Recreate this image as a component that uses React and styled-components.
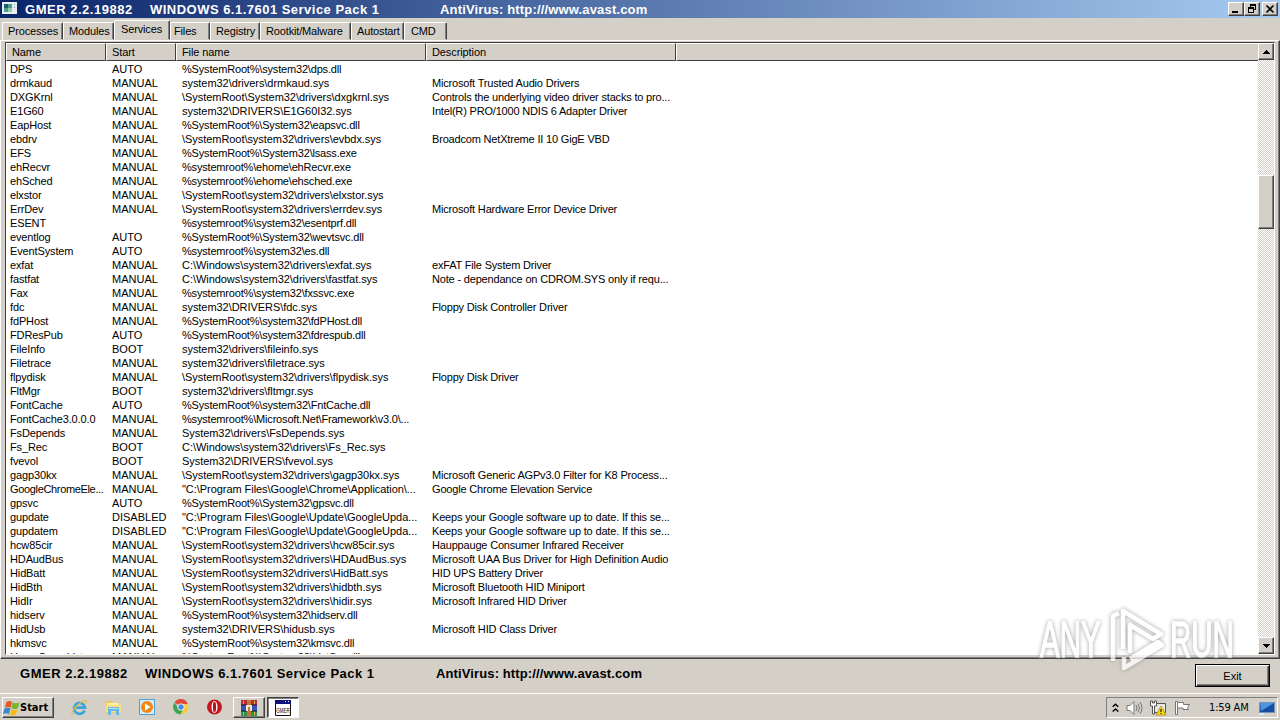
//import styled
import styled, { createGlobalStyle, css } from "styled-components";

//data
const services = [
    ["DPS", "AUTO", "%SystemRoot%\\system32\\dps.dll", ""],
    ["drmkaud", "MANUAL", "system32\\drivers\\drmkaud.sys", "Microsoft Trusted Audio Drivers"],
    ["DXGKrnl", "MANUAL", "\\SystemRoot\\System32\\drivers\\dxgkrnl.sys", "Controls the underlying video driver stacks to pro..."],
    ["E1G60", "MANUAL", "system32\\DRIVERS\\E1G60I32.sys", "Intel(R) PRO/1000 NDIS 6 Adapter Driver"],
    ["EapHost", "MANUAL", "%SystemRoot%\\System32\\eapsvc.dll", ""],
    ["ebdrv", "MANUAL", "\\SystemRoot\\system32\\drivers\\evbdx.sys", "Broadcom NetXtreme II 10 GigE VBD"],
    ["EFS", "MANUAL", "%SystemRoot%\\System32\\lsass.exe", ""],
    ["ehRecvr", "MANUAL", "%systemroot%\\ehome\\ehRecvr.exe", ""],
    ["ehSched", "MANUAL", "%systemroot%\\ehome\\ehsched.exe", ""],
    ["elxstor", "MANUAL", "\\SystemRoot\\system32\\drivers\\elxstor.sys", ""],
    ["ErrDev", "MANUAL", "\\SystemRoot\\system32\\drivers\\errdev.sys", "Microsoft Hardware Error Device Driver"],
    ["ESENT", "", "%systemroot%\\system32\\esentprf.dll", ""],
    ["eventlog", "AUTO", "%SystemRoot%\\System32\\wevtsvc.dll", ""],
    ["EventSystem", "AUTO", "%systemroot%\\system32\\es.dll", ""],
    ["exfat", "MANUAL", "C:\\Windows\\system32\\drivers\\exfat.sys", "exFAT File System Driver"],
    ["fastfat", "MANUAL", "C:\\Windows\\system32\\drivers\\fastfat.sys", "Note - dependance on CDROM.SYS only if requ..."],
    ["Fax", "MANUAL", "%systemroot%\\system32\\fxssvc.exe", ""],
    ["fdc", "MANUAL", "system32\\DRIVERS\\fdc.sys", "Floppy Disk Controller Driver"],
    ["fdPHost", "MANUAL", "%SystemRoot%\\system32\\fdPHost.dll", ""],
    ["FDResPub", "AUTO", "%SystemRoot%\\system32\\fdrespub.dll", ""],
    ["FileInfo", "BOOT", "system32\\drivers\\fileinfo.sys", ""],
    ["Filetrace", "MANUAL", "system32\\drivers\\filetrace.sys", ""],
    ["flpydisk", "MANUAL", "\\SystemRoot\\system32\\drivers\\flpydisk.sys", "Floppy Disk Driver"],
    ["FltMgr", "BOOT", "system32\\drivers\\fltmgr.sys", ""],
    ["FontCache", "AUTO", "%SystemRoot%\\system32\\FntCache.dll", ""],
    ["FontCache3.0.0.0", "MANUAL", "%systemroot%\\Microsoft.Net\\Framework\\v3.0\\...", ""],
    ["FsDepends", "MANUAL", "System32\\drivers\\FsDepends.sys", ""],
    ["Fs_Rec", "BOOT", "C:\\Windows\\system32\\drivers\\Fs_Rec.sys", ""],
    ["fvevol", "BOOT", "System32\\DRIVERS\\fvevol.sys", ""],
    ["gagp30kx", "MANUAL", "\\SystemRoot\\system32\\drivers\\gagp30kx.sys", "Microsoft Generic AGPv3.0 Filter for K8 Process..."],
    ["GoogleChromeEle...", "MANUAL", "\"C:\\Program Files\\Google\\Chrome\\Application\\...", "Google Chrome Elevation Service"],
    ["gpsvc", "AUTO", "%SystemRoot%\\System32\\gpsvc.dll", ""],
    ["gupdate", "DISABLED", "\"C:\\Program Files\\Google\\Update\\GoogleUpda...", "Keeps your Google software up to date. If this se..."],
    ["gupdatem", "DISABLED", "\"C:\\Program Files\\Google\\Update\\GoogleUpda...", "Keeps your Google software up to date. If this se..."],
    ["hcw85cir", "MANUAL", "\\SystemRoot\\system32\\drivers\\hcw85cir.sys", "Hauppauge Consumer Infrared Receiver"],
    ["HDAudBus", "MANUAL", "\\SystemRoot\\system32\\drivers\\HDAudBus.sys", "Microsoft UAA Bus Driver for High Definition Audio"],
    ["HidBatt", "MANUAL", "\\SystemRoot\\system32\\drivers\\HidBatt.sys", "HID UPS Battery Driver"],
    ["HidBth", "MANUAL", "\\SystemRoot\\system32\\drivers\\hidbth.sys", "Microsoft Bluetooth HID Miniport"],
    ["HidIr", "MANUAL", "\\SystemRoot\\system32\\drivers\\hidir.sys", "Microsoft Infrared HID Driver"],
    ["hidserv", "MANUAL", "%SystemRoot%\\system32\\hidserv.dll", ""],
    ["HidUsb", "MANUAL", "system32\\DRIVERS\\hidusb.sys", "Microsoft HID Class Driver"],
    ["hkmsvc", "MANUAL", "%SystemRoot%\\system32\\kmsvc.dll", ""],
    ["HomeGroupListe...", "MANUAL", "%SystemRoot%\\System32\\ListSvc.dll", ""],
];

const tabs = [
    { label: "Processes", width: 61, pad: 5 },
    { label: "Modules", width: 51, pad: 5 },
    { label: "Services", width: 56, pad: 6, active: true },
    { label: "Files", width: 40, pad: 3 },
    { label: "Registry", width: 50, pad: 5 },
    { label: "Rootkit/Malware", width: 91, pad: 5 },
    { label: "Autostart", width: 53, pad: 5 },
    { label: "CMD", width: 43, pad: 6 },
];

const App = () => {
    return (
        <Screen>
            <GlobalStyle />

            <TitleBar>
                <AppIcon />
                <Caption>
                    <Bold $width={125} $spacing={0.52}>GMER 2.2.19882</Bold>
                    <Bold $width={290} $spacing={0.48}>WINDOWS 6.1.7601 Service Pack 1</Bold>
                    <Bold $spacing={0.16}>AntiVirus: http:///www.avast.com</Bold>
                </Caption>
                <WindowButton aria-label="Minimize">
                    <svg width="12" height="10"><path d="M2 7h6v2h-6z" /></svg>
                </WindowButton>
                <WindowButton aria-label="Restore">
                    <svg width="12" height="10">
                        <path d="M4 0h6v2h-6zM4 2h1v1h-1zM9 2h1v4h-2v-1h1zM2 3h6v2h-6zM2 5h1v4h-1zM7 5h1v4h-1zM2 8h6v1h-6z" />
                    </svg>
                </WindowButton>
                <WindowButton $gap aria-label="Close">
                    <svg width="12" height="10"><path d="M2.5 1.5l7 7m0-7l-7 7" stroke="#000" strokeWidth="1.6" /></svg>
                </WindowButton>
            </TitleBar>

            <Tabs>
                {tabs.map((tab) => (
                    <Tab key={tab.label} $width={tab.width} $pad={tab.pad} $active={tab.active}>
                        {tab.label}
                    </Tab>
                ))}
            </Tabs>

            <Panel>
                <ListView>
                    <Table>
                        <Header>
                            <HeadCell>Name</HeadCell>
                            <HeadCell>Start</HeadCell>
                            <HeadCell>File name</HeadCell>
                            <HeadCell>Description</HeadCell>
                            <HeadCell />
                        </Header>
                        <Rows>
                            {services.map(([name, start, file, description]) => (
                                <Row key={name}>
                                    <Cell $tight $spacing={name.endsWith("...") ? -0.34 : -0.13}>{name}</Cell>
                                    <Cell>{start}</Cell>
                                    <Cell $spacing={file.startsWith("%") ? -0.18 : -0.05}>{file}</Cell>
                                    <Cell $spacing={-0.18}>{description}</Cell>
                                </Row>
                            ))}
                        </Rows>
                    </Table>
                    <Scrollbar>
                        <ScrollButton>
                            <svg width="7" height="4"><path d="M3 0h1v1h1v1h1v1h1v1h-7v-1h1v-1h1v-1h1z" /></svg>
                        </ScrollButton>
                        <Thumb />
                        <ScrollButton>
                            <svg width="7" height="4"><path d="M0 0h7v1h-1v1h-1v1h-1v1h-1v-1h-1v-1h-1v-1h-1z" /></svg>
                        </ScrollButton>
                    </Scrollbar>
                </ListView>
            </Panel>

            <Footer>
                <Caption>
                    <Bold $width={125} $spacing={0.52}>GMER 2.2.19882</Bold>
                    <Bold $width={291} $spacing={0.48}>WINDOWS 6.1.7601 Service Pack 1</Bold>
                    <Bold $spacing={0.12}>AntiVirus: http:///www.avast.com</Bold>
                </Caption>
                <ExitButton>Exit</ExitButton>
            </Footer>

            <Taskbar>
                <StartButton>
                    <WindowsLogo />
                    Start
                </StartButton>
                <QuickLaunch>
                    <ExplorerIcon />
                    <FolderIcon />
                    <PlayerIcon />
                    <ChromeIcon />
                    <OperaIcon />
                </QuickLaunch>
                <TaskButton><RarIcon /></TaskButton>
                <TaskButton $pressed><GmerIcon /></TaskButton>
                <Tray>
                    <svg width="7" height="10" viewBox="0 0 7 10" fill="none" stroke="#000" strokeWidth="1.4">
                        <path d="M.7 3.8l2.8-2.6 2.8 2.6M.7 8.5l2.8-2.6 2.8 2.6" />
                    </svg>
                    <SpeakerIcon />
                    <NetworkIcon />
                    <FlagIcon />
                    <Clock>1:59 AM</Clock>
                    <MonitorIcon />
                </Tray>
            </Taskbar>

            <Watermark>
                <Brand>ANY</Brand>
                <svg width="58" height="66" viewBox="0 0 58 66" fill="none" stroke="#fff" strokeWidth="4.6" strokeLinejoin="round">
                    <path d="M5 54V9l6-3M15 42V4l38 23-8 5-23-14v28M16 50v11l38-23-4-3-28 17" />
                </svg>
                <Brand>RUN</Brand>
            </Watermark>
        </Screen>
    );
}

//icons
const AppIcon = () => (
    <svg width="16" height="16" viewBox="0 0 16 16">
        <path fill="#e8eef0" d="M0 1h15v12h-15z" />
        <path fill="#4aa08a" d="M2 3h8v8h-8z" />
        <path fill="#1f5f70" d="M2 3h4v4h-4z" />
        <path fill="#8fd0a8" d="M6 7h4v4h-4z" />
        <path fill="#7a9cc8" d="M12 3h1v1h-1zM12 6h1v1h-1z" />
    </svg>
);

const WindowsLogo = () => (
    <svg width="17" height="16" viewBox="0 0 17 16">
        <path fill="#e9592b" d="M3.5 2Q6.5 0 9.2 2L7.7 7.8Q5 6 1.8 7.8z" />
        <path fill="#75b72d" d="M9.9 2.4Q13 4 16.6 2.2L14.8 8.2Q11 10 8.4 8z" />
        <path fill="#3687d1" d="M1.5 8.6Q4.7 6.8 7.4 8.6L5.8 14.2Q3 12.3 0 14.2z" />
        <path fill="#f8bc20" d="M8.2 9Q11 10.8 14.5 9.2L12.8 15Q9.3 16.4 6.6 14.6z" />
    </svg>
);

const ExplorerIcon = () => (
    <svg width="17" height="17" viewBox="0 0 17 17" fill="none">
        <path d="M13.6 11.5A5.5 5.5 0 1 1 14 8.7H5.2" stroke="#38a5dd" strokeWidth="2.7" />
        <path d="M3 14.5C-.8 16.8.8 11 6.5 6.2S16.7-.3 15.4 4.5" stroke="#e4bd42" strokeWidth="1.2" />
    </svg>
);

const FolderIcon = () => (
    <svg width="17" height="17" viewBox="0 0 17 17">
        <path fill="#e9c866" d="M1 2h6l1 2h7v10H1z" />
        <path fill="#fff0a7" d="M2 4h12v7H2z" />
        <path fill="#f9df84" d="M1 6h15v7H1z" />
        <path fill="#65b9e8" d="M3 9q0-1 1-1h9q1 0 1 1v7h-3v-4H6v4H3z" />
        <path fill="#b9e3f7" d="M4 9h9v1H4z" />
    </svg>
);

const PlayerIcon = () => (
    <svg width="17" height="17" viewBox="0 0 17 17">
        <path fill="#d4edfc" stroke="#4d9ed3" d="M.5.5h15v15H.5z" />
        <circle cx="8" cy="8" r="6" fill="#f28718" />
        <path fill="#fff" d="M6 4.5l5.5 3.5L6 11.5z" />
    </svg>
);

const ChromeIcon = () => (
    <svg width="16" height="16" viewBox="0 0 16 16">
        <path fill="#e04b38" d="M8 8L1.6 3.6A7.2 7.2 0 0 1 14.7 5H8z" />
        <path fill="#fbca3a" d="M8 5h6.7A7.2 7.2 0 0 1 7.6 15.2L10.5 9z" />
        <path fill="#3da553" d="M1.6 3.6L5.4 9.5l4.8.7-2.6 5A7.2 7.2 0 0 1 1.6 3.6z" />
        <circle cx="8" cy="8" r="3.5" fill="#fff" />
        <circle cx="8" cy="8" r="2.7" fill="#468aed" />
    </svg>
);

const OperaIcon = () => (
    <svg width="17" height="16" viewBox="0 0 17 16">
        <circle cx="8.5" cy="8" r="7.5" fill="#c51720" />
        <ellipse cx="8.5" cy="8" rx="3" ry="6" fill="#fff" />
        <ellipse cx="8.5" cy="8" rx="1.6" ry="5.3" fill="#b5131c" />
    </svg>
);

const RarIcon = () => (
    <svg width="16" height="16" viewBox="0 0 16 16">
        <path fill="#b82e38" d="M0 0h16v5H0z" />
        <path fill="#3854b4" d="M0 5h16v6H0z" />
        <path fill="#32924a" d="M0 11h16v5H0z" />
        <path fill="#191b2a" d="M0 4.5h16v1H0zM0 10.5h16v1H0z" />
        <path fill="#c47735" d="M6 0h4v16H6z" />
        <path fill="#f3e5cf" d="M5 5h6v6H9V7H7v4H5z" />
        <path fill="#d9b642" d="M2 1h1v3H2zM13 1h1v3h-1zM2 12h1v3H2zM13 12h1v3h-1z" />
    </svg>
);

const GmerIcon = () => (
    <svg width="16" height="16" viewBox="0 0 16 16">
        <path fill="#fff" stroke="#111" d="M.5.5h15v15H.5z" />
        <path fill="#10107a" d="M0 0h16v4H0z" />
        <path fill="#fff" d="M10 1h1v1h-1zM13 1h1v1h-1z" />
        <text x="1.3" y="12.5" fontFamily="Liberation Sans" fontSize="7" textLength="13.4" lengthAdjust="spacingAndGlyphs">GMER</text>
    </svg>
);

const SpeakerIcon = () => (
    <svg width="17" height="16" viewBox="0 0 17 16" fill="none" stroke="#777">
        <path fill="#fff" d="M1 5.5h3l4-4v13l-4-4H1z" />
        <path d="M10 5q2 3 0 6M12 3.5q3 4.5 0 9M14 2q4 6 0 12" />
    </svg>
);

const NetworkIcon = () => (
    <svg width="17" height="16" viewBox="0 0 17 16">
        <path fill="#e6e6e2" stroke="#555" d="M4.5 3.5h11v9h-11z" />
        <path fill="#fff" stroke="#555" d="M.5 1v5h2v8h2V6h2V1h-2v2h-2V1z" />
        <path fill="#f8d716" stroke="#ab8b00" strokeWidth=".7" d="M11 6l5 9H6z" />
        <path fill="#222" d="M10.4 9h1.2v3h-1.2zM10.4 13h1.2v1h-1.2z" />
    </svg>
);

const FlagIcon = () => (
    <svg width="17" height="16" viewBox="0 0 17 16" fill="#fff" stroke="#777">
        <path d="M1.5 1.5h2v13h-2z" />
        <path d="M3.5 2.5h6v2h6l-2 3 1 2H9V8H3.5z" />
    </svg>
);

const MonitorIcon = () => (
    <svg width="17" height="14" viewBox="0 0 17 14">
        <path fill="#174ca5" stroke="#7593b5" d="M1.5 1.5h15v10h-15z" />
        <path fill="#4e94de" d="M2 2h14L3 10z" />
        <path fill="#d6e9f8" d="M1 12h5v2H1z" />
    </svg>
);

//styles
const GlobalStyle = createGlobalStyle`
    * {
        box-sizing: border-box;
    }

    body {
        margin: 0;
        overflow: hidden;
    }

    svg {
        display: block;
        flex: none;
    }
`

const raised = css`
    background: #d4d0c8;
    border: 1px solid;
    border-color: #fff #404040 #404040 #fff;
    box-shadow: inset -1px -1px #808080;
`

const Screen = styled.div`
    position: relative;
    display: flex;
    flex-direction: column;
    width: 1280px;
    height: 720px;
    overflow: hidden;
    background: #d4d0c8;
    color: #000;
    font: 11px/14px "Liberation Sans", Arial, sans-serif;
`

const TitleBar = styled.header`
    display: flex;
    align-items: center;
    height: 18px;
    padding: 0 2px;
    background: linear-gradient(90deg, #0a246a, #a6caf0);
    color: #fff;
`

const Caption = styled.div`
    display: flex;
    flex: 1;
    padding: 2px 0 0 7px;
`

const Bold = styled.span`
    width: ${(props) => (props.$width ? `${props.$width}px` : "auto")};
    font-size: 13px;
    font-weight: bold;
    line-height: 16px;
    letter-spacing: ${(props) => props.$spacing}px;
    white-space: nowrap;
`

const WindowButton = styled.button`
    ${raised}
    width: 16px;
    height: 14px;
    padding: 1px;
    margin-left: ${(props) => (props.$gap ? "2px" : "0")};
`

const Tabs = styled.nav`
    display: flex;
    align-items: flex-end;
    height: 22px;
    padding-left: 2px;
`

const Tab = styled.div`
    width: ${(props) => props.$width}px;
    height: ${(props) => (props.$active ? "20px" : "18px")};
    padding: 1px 0 0 ${(props) => props.$pad}px;
    border: 1px solid;
    border-color: #fff #404040 transparent #fff;
    border-radius: 2px 2px 0 0;
    box-shadow: inset -1px 0 #808080;
    letter-spacing: -0.15px;
    white-space: nowrap;
`

const Panel = styled.main`
    height: 619px;
    padding: 1px 4px 3px;
    border: 1px solid;
    border-color: #fff #404040 #404040 #fff;
    box-shadow: inset -1px -1px #808080;
`

const ListView = styled.section`
    display: flex;
    height: 613px;
    border: 1px solid;
    border-color: #404040 #fff #fff #404040;
    background: #fff;
`

const Table = styled.div`
    flex: 1;
    min-width: 0;
    display: flex;
    flex-direction: column;
`

const Header = styled.div`
    display: grid;
    grid-template-columns: 100px 70px 250px 250px 1fr;
    height: 17px;
    margin-bottom: 2px;
    flex: none;
`

const HeadCell = styled.div`
    padding: 1px 0 0 5px;
    background: #d4d0c8;
    border: 1px solid;
    border-color: #fff #404040 #404040 #fff;
    border-right-width: ${(props) => (props.children ? "1px" : "0")};
    line-height: 15px;
    letter-spacing: -0.1px;
`

const Rows = styled.div`
    flex: 1;
    min-height: 0;
    overflow: hidden;
`

const Row = styled.div`
    display: grid;
    grid-template-columns: 100px 70px 250px 250px;
    height: 14px;
`

const Cell = styled.div`
    padding-left: ${(props) => (props.$tight ? "4px" : "6px")};
    letter-spacing: ${(props) => props.$spacing || 0}px;
    white-space: nowrap;
`

const Scrollbar = styled.div`
    display: flex;
    flex-direction: column;
    width: 16px;
    background: repeating-conic-gradient(#fff 0 25%, #d4d0c8 0 50%) 0 0 / 2px 2px;
`

const ScrollButton = styled.button`
    ${raised}
    display: grid;
    place-items: center;
    width: 16px;
    height: 17px;
    padding: 0;
`

const Thumb = styled.div`
    ${raised}
    height: 54px;
    margin: 115px 0 auto;
`

const Footer = styled.footer`
    display: flex;
    height: 33px;
    padding: 5px 10px 0 13px;
`

const ExitButton = styled.button`
    width: 75px;
    height: 23px;
    padding: 0;
    border: 1px solid #000;
    background: #d4d0c8;
    box-shadow: inset 1px 1px #fff, inset -1px -1px #404040, inset -2px -2px #808080;
    font: inherit;
`

const Taskbar = styled.div`
    display: flex;
    height: 28px;
    padding: 4px 2px 3px;
    border-top: 1px solid #d4d0c8;
    box-shadow: inset 0 1px #fff;
`

const StartButton = styled.button`
    ${raised}
    display: flex;
    align-items: center;
    width: 52px;
    height: 21px;
    padding: 0;
    font: bold 11px "DejaVu Sans Condensed", "DejaVu Sans", sans-serif;
    letter-spacing: 0;
`

const QuickLaunch = styled.div`
    display: flex;
    align-items: center;
    gap: 17px;
    width: 179px;
    padding-left: 17px;
`

const TaskButton = styled.button`
    ${raised}
    display: grid;
    place-items: center;
    width: 32px;
    height: 21px;
    padding: 0;
    margin-right: 2px;
    ${(props) => props.$pressed && css`
        background: #fff;
        border-color: #404040 #fff #fff #404040;
        box-shadow: inset 1px 1px #808080;
    `}
`

const Tray = styled.div`
    display: flex;
    align-items: center;
    gap: 7px;
    width: 172px;
    height: 21px;
    margin-left: auto;
    padding-left: 5px;
    border: 1px solid;
    border-color: #808080 #fff #fff #808080;
`

const Clock = styled.span`
    width: 42px;
    margin: 0 0 0 11px;
    font-family: "DejaVu Sans Condensed", "DejaVu Sans", sans-serif;
    letter-spacing: -0.15px;
    white-space: nowrap;
`

// floats above both the list and the footer
const Watermark = styled.div`
    position: absolute;
    left: 1040px;
    top: 607px;
    display: flex;
    align-items: center;
    width: 194px;
    height: 66px;
    opacity: 0.75;
    filter: drop-shadow(0 0 2px #808080);
    pointer-events: none;

    svg {
        margin: 0 4px 0 7px;
    }
`

const Brand = styled.span`
    width: 61px;
    color: #fff;
    font-size: 50px;
    line-height: 66px;
    -webkit-text-stroke: 1.5px #fff;
    transform: scaleX(0.59);
    transform-origin: 0 50%;
`

export default App;
